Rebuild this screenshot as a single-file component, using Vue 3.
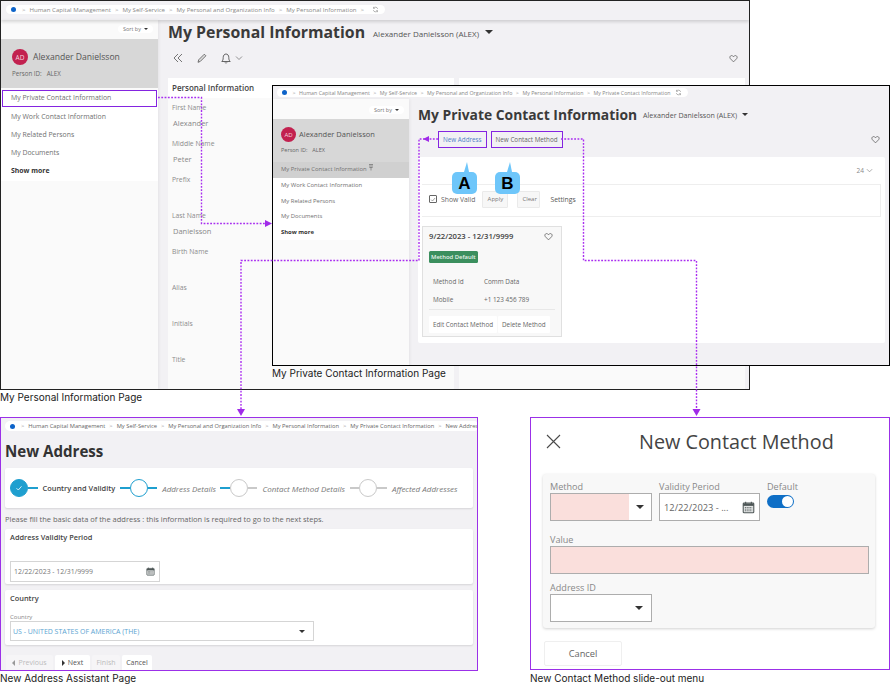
<script setup>
const crumbsPersonal = ['Human Capital Management', 'My Self-Service', 'My Personal and Organization Info', 'My Personal Information']
const crumbsPrivate = [...crumbsPersonal, 'My Private Contact Information']
const crumbsAddress = [...crumbsPrivate, 'New Address']

const navLinks = ['My Work Contact Information', 'My Related Persons', 'My Documents']

const personalFields = [
  { label: 'First Name', value: 'Alexander' },
  { label: 'Middle Name', value: 'Peter' },
  { label: 'Prefix', value: '' },
  { label: 'Last Name', value: 'Danielsson' },
  { label: 'Birth Name', value: '' },
  { label: 'Alias', value: '' },
  { label: 'Initials', value: '' },
  { label: 'Title', value: '' }
]

const steps = [
  { name: 'Country and Validity', state: 'done', left: false, right: true },
  { name: 'Address Details', state: 'active', left: true, right: true },
  { name: 'Contact Method Details', state: 'todo', left: true, right: false },
  { name: 'Affected Addresses', state: 'todo', left: false, right: false }
]
</script>

<template>
  <div class="canvas">
    <svg class="defs" width="0" height="0">
      <symbol id="heart" viewBox="0 0 16 16">
        <path d="M8 14 2.4 8.3C.6 6.4 1.7 2.8 4.6 2.8c1.5 0 2.6.8 3.4 2 .8-1.2 1.900-2 3.400-2 2.900 0 4 3.600 2.200 5.500z" fill="none" stroke="currentColor" stroke-width="1.300" />
      </symbol>
      <symbol id="refresh" viewBox="0 0 16 16">
        <path d="M13 6.500A5.200 5.200 0 0 0 3.600 5M3 9.500A5.200 5.200 0 0 0 12.400 11M3.400 2v3.300h3.300M12.600 14v-3.300H9.300" fill="none" stroke="currentColor" stroke-width="1.400" />
      </symbol>
      <symbol id="calendar" viewBox="0 0 16 16">
        <rect x="1.500" y="2.500" width="13" height="12" rx="1" fill="#e4e6e6" stroke="#4d5656" stroke-width="1.300" />
        <path d="M1.500 3h13v3h-13z" fill="#4d5656" />
        <path d="M4.500 1v3M11.500 1v3" stroke="#4d5656" stroke-width="1.300" />
        <path d="M3.500 8h9M3.500 10h9M3.500 12h9" stroke="#4d5656" stroke-dasharray="1.400 .8" />
      </symbol>
    </svg>

    <!-- My Personal Information -->
    <section class="win win-personal">
      <header class="crumb-bar">
        <nav class="crumbs crumbs-lg">
          <i class="home-dot"></i>
          <template v-for="c in crumbsPersonal" :key="c"><b class="sep">&gt;</b><span>{{ c }}</span></template>
          <b class="sep">&gt;</b>
          <svg class="crumb-refresh"><use href="#refresh" /></svg>
        </nav>
      </header>
      <div class="win-body">
        <aside class="side side-lg">
          <div class="sort-row"><span class="sort-pill">Sort by <i class="caret caret-xs"></i></span></div>
          <div class="person">
            <div class="person-top"><span class="avatar">AD</span><span class="person-name">Alexander Danielsson</span></div>
            <div class="person-id"><span>Person ID:</span><span>ALEX</span></div>
          </div>
          <ul class="nav">
            <li class="nav-outlined">My Private Contact Information</li>
            <li v-for="n in navLinks" :key="n">{{ n }}</li>
            <li class="nav-more">Show more</li>
          </ul>
        </aside>
        <main class="main-lg">
          <div class="title-row">
            <h1>My Personal Information</h1>
            <span class="title-sub">Alexander Danielsson (ALEX)</span>
            <i class="caret caret-md"></i>
          </div>
          <div class="tools">
            <svg width="12" height="12" viewBox="0 0 12 12" class="tool-a"><path d="M6 2 2 6l4 4M10 2 6 6l4 4" fill="none" stroke="#666" stroke-width=".9" /></svg>
            <svg width="12" height="12" viewBox="0 0 12 12" class="tool-b"><path d="M2 10.300l.7-2.500 5.600-5.600 1.600 1.600-5.600 5.600z" fill="#ddd" stroke="#555" stroke-width=".8" /></svg>
            <svg width="12" height="12" viewBox="0 0 12 12" class="tool-b"><path d="M1.800 9.500c1-1 1.400-1.800 1.400-4C3.200 3.400 4.400 2 6 2s2.800 1.400 2.800 3.500c0 2.200.4 3 1.400 4zM5 10.500c.3.800 1.700.8 2 0" fill="none" stroke="#555" stroke-width=".9" /></svg>
            <svg width="8" height="8" viewBox="0 0 8 8" class="tool-c"><path d="M1 2.500 4 5.500l3-3" fill="none" stroke="#777" stroke-width=".8" /></svg>
            <svg class="heart heart-end"><use href="#heart" /></svg>
          </div>
          <div class="columns">
            <div class="info-card">
              <h3>Personal Information</h3>
              <div class="info-fields">
                <div v-for="f in personalFields" :key="f.label" class="info-field">
                  <label>{{ f.label }}</label>
                  <span>{{ f.value }}</span>
                </div>
              </div>
            </div>
            <div class="info-card"><h3></h3></div>
          </div>
        </main>
      </div>
    </section>
    <p class="cap cap-personal">My Personal Information Page</p>

    <!-- My Private Contact Information -->
    <section class="win win-private">
      <header class="crumb-bar-plain">
        <nav class="crumbs crumbs-sm">
          <i class="home-dot"></i>
          <template v-for="c in crumbsPrivate" :key="c"><b class="sep">&gt;</b><span>{{ c }}</span></template>
          <svg class="crumb-refresh"><use href="#refresh" /></svg>
        </nav>
      </header>
      <div class="win-body">
        <aside class="side side-sm">
          <div class="sort-row"><span class="sort-pill">Sort by <i class="caret caret-xs"></i></span></div>
          <div class="person">
            <div class="person-top"><span class="avatar">AD</span><span class="person-name">Alexander Danielsson</span></div>
            <div class="person-id"><span>Person ID:</span><span>ALEX</span></div>
          </div>
          <ul class="nav">
            <li class="nav-selected">My Private Contact Information <svg width="6" height="7" viewBox="0 0 6 7"><path d="M1 .5h4M1.500 3.500h3M3 3.500v3M2 .5v3M4 .5v3" stroke="#666" stroke-width=".6" fill="none" /></svg></li>
            <li v-for="n in navLinks" :key="n">{{ n }}</li>
            <li class="nav-more">Show more</li>
          </ul>
        </aside>
        <main class="main-sm">
          <div class="title-row">
            <h1>My Private Contact Information</h1>
            <span class="title-sub">Alexander Danielsson (ALEX)</span>
            <i class="caret caret-sm"></i>
          </div>
          <div class="actions">
            <a class="action action-link">New Address</a>
            <a class="action">New Contact Method</a>
            <svg class="heart heart-end"><use href="#heart" /></svg>
          </div>
          <div class="results">
            <div class="results-head"><span>24</span><svg width="7" height="7" viewBox="0 0 8 8"><path d="M1 2.500 4 5.500l3-3" fill="none" stroke="#888" stroke-width=".8" /></svg></div>
            <div class="filters">
              <span class="check"><svg width="7" height="7" viewBox="0 0 8 8"><path d="M1.500 4.200 3.300 6 6.800 2" fill="none" stroke="#666" stroke-width=".8" /></svg></span>
              <span class="show-valid">Show Valid</span>
              <button class="filter-btn btn-apply">Apply</button>
              <button class="filter-btn btn-clear">Clear</button>
              <span class="settings">Settings</span>
            </div>
            <article class="method">
              <div class="method-head"><strong>9/22/2023 - 12/31/9999</strong><svg class="heart"><use href="#heart" /></svg></div>
              <span class="badge">Method Default</span>
              <dl class="method-rows">
                <dt>Method Id</dt><dd>Comm Data</dd>
                <dt>Mobile</dt><dd>+1 123 456 789</dd>
              </dl>
              <div class="method-btns"><button>Edit Contact Method</button><button>Delete Method</button></div>
            </article>
          </div>
        </main>
      </div>
    </section>
    <p class="cap cap-private">My Private Contact Information Page</p>

    <!-- New Address assistant -->
    <section class="win win-address">
      <nav class="crumbs crumbs-addr">
        <i class="home-dot"></i>
        <template v-for="c in crumbsAddress" :key="c"><b class="sep">&gt;</b><span>{{ c }}</span></template>
      </nav>
      <h1 class="addr-title">New Address</h1>
      <div class="addr-card stepper">
        <div v-for="s in steps" :key="s.name" class="step" :class="'step-' + s.state">
          <i class="step-line" :class="{ on: s.left }"></i>
          <span class="step-circle">
            <svg v-if="s.state === 'done'" width="8" height="8" viewBox="0 0 8 8"><path d="M1.500 4.200 3.300 6 6.500 2.300" fill="none" stroke="#fff" stroke-width=".8" /></svg>
          </span>
          <i class="step-line" :class="{ on: s.right }"></i>
          <span class="step-name">{{ s.name }}</span>
        </div>
      </div>
      <p class="addr-hint">Please fill the basic data of the address : this information is required to go to the next steps.</p>
      <div class="addr-card addr-validity">
        <h4>Address Validity Period</h4>
        <div class="addr-date"><span>12/22/2023 - 12/31/9999</span><svg width="9" height="9"><use href="#calendar" /></svg></div>
      </div>
      <div class="addr-card addr-country">
        <h4>Country</h4>
        <label>Country</label>
        <div class="addr-select"><span>US - UNITED STATES OF AMERICA (THE)</span><i class="caret caret-sm"></i></div>
      </div>
      <div class="addr-btns">
        <button class="off btn-prev"><i class="tri-left"></i>Previous</button>
        <button class="btn-next"><i class="tri-right"></i>Next</button>
        <button class="off btn-finish">Finish</button>
        <button class="btn-cancel">Cancel</button>
      </div>
    </section>
    <p class="cap cap-address">New Address Assistant Page</p>

    <!-- New Contact Method slide-out -->
    <section class="win win-method">
      <header class="slide-head">
        <svg width="15" height="15" viewBox="0 0 15 15"><path d="M1 1l13 13M14 1 1 14" stroke="#4a4a4a" stroke-width="1.100" /></svg>
        <h2>New Contact Method</h2>
      </header>
      <div class="slide-form">
        <div class="slide-row">
          <div class="slide-field w-102">
            <label>Method</label>
            <div class="slide-input"><span class="pink-part"></span><span class="select-end"><i class="caret caret-md"></i></span></div>
          </div>
          <div class="slide-field w-101">
            <label>Validity Period</label>
            <div class="slide-input date-input"><span>12/22/2023 - ...</span><svg width="13" height="13"><use href="#calendar" /></svg></div>
          </div>
          <div class="slide-field">
            <label>Default</label>
            <span class="toggle"><i></i></span>
          </div>
        </div>
        <div class="slide-field value-field">
          <label>Value</label>
          <div class="slide-input pink"></div>
        </div>
        <div class="slide-field w-102">
          <label>Address ID</label>
          <div class="slide-input white-select"><i class="caret caret-md"></i></div>
        </div>
      </div>
      <button class="slide-cancel">Cancel</button>
    </section>
    <p class="cap cap-method">New Contact Method slide-out menu</p>

    <!-- connectors between the screens -->
    <svg class="wires" width="891" height="684" viewBox="0 0 891 684">
      <g fill="none" stroke="#a92df0" stroke-width="1.400" stroke-dasharray="1.800 1.500">
        <path d="M158 97.500H201.500V223.500H267" />
        <path d="M438 139H419V260.500H241V409" />
        <path d="M561 139H583.500V260.500H696.500V409" />
      </g>
      <g fill="#a02be8">
        <path d="M272 223.500 265 220v7z" />
        <path d="M423 139l6-3v6z" />
        <path d="M241 416l-4-7h8z" />
        <path d="M696.500 416l-4-7h8z" />
      </g>
    </svg>

    <!-- callouts -->
    <div class="callout callout-a">A</div>
    <div class="callout callout-b">B</div>
  </div>
</template>

<style scoped>
.canvas {
  position: relative;
  width: 891px;
  height: 684px;
  overflow: hidden;
  background: #fff;
  font-family: "Open Sans", sans-serif;
  color: #666;
}
.defs { position: absolute; }
.win {
  position: absolute;
  box-sizing: border-box;
  background: #f2f1f4;
  overflow: hidden;
}
.win-personal { left: 0; top: 0; width: 750px; height: 390px; border: 1px solid #222; }
.win-private { left: 272px; top: 85px; width: 618px; height: 281px; border: 1.500px solid #000; }
.win-address { left: 0; top: 417px; width: 478px; height: 254px; border: 1px solid #9b30e8; }
.win-method { left: 530px; top: 417px; width: 360px; height: 253px; border: 1px solid #9b30e8; background: #fff; }

.cap {
  position: absolute;
  margin: 0;
  font: 10px/12px Inter, sans-serif;
  color: #222;
  white-space: nowrap;
}
.cap-personal { left: 0; top: 391px; }
.cap-private { left: 272px; top: 367px; }
.cap-address { left: 0; top: 672px; }
.cap-method { left: 530px; top: 672px; }

/* breadcrumbs */
.crumb-bar {
  height: 19px;
  padding: 4px 5px 0;
  box-sizing: border-box;
  box-shadow: 0 2px 3px rgba(0, 0, 0, .14);
  position: relative;
}
.crumb-bar-plain { padding: 2px 4px 0; height: 11px; }
.crumbs {
  display: flex;
  align-items: center;
  background: #fff;
  border-radius: 6px;
  color: #888;
  white-space: nowrap;
}
.crumbs-lg { height: 9px; width: 379px; padding-left: 3px; font-size: 6.100px; box-sizing: border-box; }
.crumbs-sm { height: 9px; width: 411px; padding-left: 3px; font-size: 5.300px; box-sizing: border-box; }
.crumbs-addr {
  height: 10px;
  width: 474px;
  margin: 3px 0 0 4px;
  padding-left: 3px;
  font-size: 5.770px;
  overflow: hidden;
  color: #666;
  box-sizing: border-box;
}
.home-dot {
  flex: none;
  width: 5px;
  height: 5px;
  margin: 0 2px;
  border-radius: 50%;
  background: #0d63c9;
}
.sep { margin: 0 4px; font-weight: 400; color: #999; }
.crumbs-sm .sep { margin: 0 3.500px; }
.crumb-refresh { width: 7px; height: 7px; margin-left: 4px; color: #888; }

.win-body { display: flex; height: 369px; }

/* side panel */
.side { flex: none; background: #fafafa; box-shadow: 1px 0 3px rgba(0, 0, 0, .06); }
.side-lg { width: 157px; }
.side-sm { width: 136px; height: 280px; }
.sort-row { display: flex; justify-content: flex-end; padding-right: 5px; }
.side-lg .sort-row { padding-top: 5px; }
.side-sm .sort-row { padding-top: 7px; }
.sort-pill {
  display: flex;
  align-items: center;
  gap: 3px;
  height: 8px;
  padding: 0 5px;
  border-radius: 5px;
  background: #fff;
  font-size: 5.500px;
  color: #777;
}
.person { background: #d7d7d7; }
.side-lg .person { height: 49px; margin-top: 6px; padding: 10px 11px 0; box-sizing: border-box; }
.side-sm .person { height: 43px; margin-top: 5px; padding: 8px 8px 0; box-sizing: border-box; }
.person-top { display: flex; align-items: center; }
.avatar {
  display: flex;
  align-items: center;
  justify-content: center;
  border-radius: 50%;
  background: #c2214f;
  color: #f6d6df;
  font-weight: 400;
}
.side-lg .avatar { width: 16px; height: 16px; font-size: 6.500px; margin-right: 5px; }
.side-sm .avatar { width: 15px; height: 15px; font-size: 6px; margin-right: 3px; }
.person-name { color: #555; }
.side-lg .person-name { font-size: 8.600px; }
.side-sm .person-name { font-size: 7.500px; margin-top: -2px; }
.person-id { display: flex; color: #666; }
.side-lg .person-id { gap: 5px; margin-top: 4px; font-size: 6.200px; }
.side-sm .person-id { gap: 5px; margin-top: 4px; font-size: 5.500px; }

.nav { margin: 0; padding: 0; list-style: none; background: #fff; color: #707070; white-space: nowrap; }
.side-lg .nav { font-size: 6.900px; padding-bottom: 1px; margin-top: 2px; }
.side-lg .nav li { box-sizing: border-box; height: 18px; line-height: 18px; padding-left: 10px; }
.side-lg .nav .nav-outlined {
  height: 17px;
  line-height: 14px;
  margin: 0 1px 1px;
  padding-left: 8px;
  border: 1px solid #8424e0;
}
.side-sm .nav { font-size: 5.900px; }
.side-sm .nav li { box-sizing: border-box; height: 15.500px; line-height: 15.500px; padding-left: 8px; }
.side-sm .nav .nav-selected { height: 16px; background: #d0d0d0; }
.side-lg .nav .nav-more, .side-sm .nav .nav-more { font-weight: 700; color: #333; }

/* page header */
h1 { margin: 0; color: #3a3a3a; font-weight: 700; white-space: nowrap; }
.title-row { display: flex; align-items: center; }
.main-lg { flex: 1; padding: 0 4px 0 10px; }
.main-lg .title-row { height: 22px; margin-top: 1px; }
.main-lg h1 { font-size: 15.850px; }
.main-lg .title-sub { margin-left: 8px; margin-top: 2px; font-size: 8px; color: #555; }
.main-sm { flex: 1; padding: 0 4px 0 9px; }
.main-sm .title-row { height: 20px; margin-top: 5px; }
.main-sm h1 { font-size: 13.850px; }
.main-sm .title-sub { margin-left: 6px; margin-top: 2px; font-size: 7.100px; color: #555; }
.caret {
  display: inline-block;
  width: 0;
  height: 0;
  border-style: solid;
  border-color: #333 transparent transparent;
}
.caret-xs { border-width: 2.500px 2.500px 0; }
.caret-sm { border-width: 3px 3px 0; margin-left: 5px; }
.caret-md { border-width: 4px 4px 0; margin-left: 6px; }

.tools { display: flex; align-items: center; height: 20px; margin-top: 5px; padding-left: 4px; }
.tool-b { margin-left: 12px; }
.tool-c { margin-left: 3px; }
.heart { width: 9px; height: 9px; color: #555; }
.heart-end { margin-left: auto; margin-right: 7px; }
.actions .heart-end { margin-right: 5px; }

.columns { display: flex; gap: 5px; margin-top: 10px; }
.info-card { flex: 1; background: #fafafa; border-radius: 2px; min-height: 312px; }
.info-card h3 {
  margin: 0;
  padding: 0 4px;
  height: 20px;
  line-height: 20px;
  background: #fff;
  font-size: 8px;
  font-weight: 600;
  color: #444;
}
.info-fields { padding: 4px 4px 0; }
.info-field { height: 36px; }
.info-field label { display: block; font-size: 6.800px; line-height: 11px; color: #8c8c8c; }
.info-field span { display: block; margin: 5px 0 0 1px; font-size: 7.500px; line-height: 11px; color: #888; }

/* private contact page */
.actions { display: flex; align-items: center; gap: 4px; height: 18px; margin-top: 6px; padding-left: 20px; }
.action {
  box-sizing: border-box;
  height: 17px;
  line-height: 15px;
  padding: 0 4px;
  border: 1px solid #8424e0;
  font-size: 6.300px;
  color: #666;
  white-space: nowrap;
}
.action-link { color: #4f7fc9; }
.results {
  margin: 9px 0 0;
  width: 467px;
  height: 186px;
  box-sizing: border-box;
  padding: 0 4px;
  background: #fff;
  border-radius: 2px;
}
.results-head {
  display: flex;
  align-items: center;
  justify-content: flex-end;
  gap: 2px;
  height: 27px;
  padding-right: 8px;
  font-size: 6.500px;
  color: #888;
}
.filters {
  display: flex;
  align-items: center;
  height: 33px;
  box-sizing: border-box;
  padding: 0 0 3px 7px;
  border: 1px solid #eee;
  border-width: 1px 1px 1px 0;
  font-size: 6.800px;
}
.check {
  display: flex;
  align-items: center;
  justify-content: center;
  width: 8px;
  height: 8px;
  box-sizing: border-box;
  border: .7px solid #666;
  border-radius: 1px;
}
.show-valid { margin-left: 4px; color: #666; }
.filter-btn {
  height: 17px;
  padding: 0 4px;
  border: 1px solid #eaeaea;
  background: #f7f7f7;
  border-radius: 1px;
  font: 6px "Open Sans", sans-serif;
  color: #777;
}
.btn-apply { margin-left: 7px; width: 26px; }
.btn-clear { margin-left: 9px; width: 23px; }
.settings { margin-left: 10px; color: #555; }
.method {
  width: 140px;
  height: 111px;
  box-sizing: border-box;
  margin-top: 9px;
  padding: 3px 6px 0;
  background: #f8f8f8;
  border: 1px solid #e0e0e0;
}
.method-head { display: flex; align-items: center; justify-content: space-between; height: 12px; padding-right: 2px; }
.method-head strong { font-size: 7.700px; font-weight: 600; color: #444; }
.badge {
  display: inline-block;
  margin-top: 5px;
  padding: 0 2px;
  height: 12px;
  line-height: 12px;
  border-radius: 1.500px;
  background: #3b8f5e;
  color: #e6f3ea;
  font-size: 5.900px;
  font-weight: 600;
}
.method-rows {
  display: grid;
  grid-template-columns: 51px 1fr;
  grid-auto-rows: 18px;
  align-items: center;
  margin: 8px 0 0;
  padding: 0 4px 1px;
  font-size: 6.400px;
  border-bottom: 1px solid #e8e8e8;
  color: #666;
}
.method-rows dd { margin: 0; }
.method-btns { display: flex; gap: 1px; margin-top: 6px; }
.method-btns button {
  height: 17px;
  padding: 0 4px;
  border: 0;
  background: #fff;
  border-radius: 1px;
  font: 6.300px "Open Sans", sans-serif;
  color: #666;
  white-space: nowrap;
}

/* new address assistant */
.addr-title { margin: 9px 0 0 4px; height: 22px; font-size: 15.100px; line-height: 22px; color: #333; }
.addr-card {
  margin: 0 4px;
  background: #fff;
  border-radius: 2px;
  box-shadow: 0 1px 2px rgba(0, 0, 0, .12);
}
.addr-card h4 { margin: 0; font-size: 7.400px; font-weight: 600; color: #444; }
.stepper { display: flex; align-items: center; height: 40px; margin-top: 6px; padding-left: 5px; }
.step { display: flex; align-items: center; }
.step-circle {
  display: flex;
  align-items: center;
  justify-content: center;
  width: 18px;
  height: 18px;
  box-sizing: border-box;
  border: 1px solid #c9c9c9;
  border-radius: 50%;
}
.step-done .step-circle { background: #1f9fcf; border-color: #1f9fcf; }
.step-active .step-circle { border-color: #1f9fcf; }
.step-line { display: block; width: 9.500px; height: 1.500px; background: #c9c9c9; }
.step-line.on { background: #1f9fcf; }
.step-done .step-line:first-child { display: none; }
.step-name { margin: 0 5px; font-size: 8px; font-style: italic; color: #777; white-space: nowrap; }
.step-active .step-name { margin-right: 4.500px; }
.step-done .step-name { font-size: 7.400px; font-style: normal; font-weight: 600; color: #444; }
.addr-hint { margin: 0 0 0 4px; height: 21px; font-size: 7.490px; line-height: 22px; color: #666; white-space: nowrap; }
.addr-validity { height: 55px; padding: 3px 5px 0; box-sizing: border-box; }
.addr-date {
  display: flex;
  align-items: center;
  justify-content: space-between;
  box-sizing: border-box;
  width: 150px;
  height: 21px;
  margin-top: 19px;
  padding: 0 4px 0 3px;
  border: 1px solid #d5d5d5;
  font-size: 6.900px;
  color: #777;
}
.addr-country { height: 55px; margin-top: 6px; padding: 3px 5px 0; box-sizing: border-box; }
.addr-country label { display: block; margin-top: 10px; font-size: 6px; line-height: 8px; color: #888; }
.addr-select {
  display: flex;
  align-items: center;
  justify-content: space-between;
  box-sizing: border-box;
  width: 304px;
  height: 20px;
  padding: 0 8px 0 2px;
  border: 1px solid #d5d5d5;
  font-size: 6.980px;
  color: #5aa4d2;
}
.addr-btns { display: flex; gap: 2px; margin: 10px 0 0 5px; }
.addr-btns button {
  display: flex;
  align-items: center;
  justify-content: center;
  gap: 3px;
  height: 15px;
  padding: 0;
  border: 0;
  background: #fff;
  border-radius: 2px 2px 0 0;
  font: 7px "Open Sans", sans-serif;
  color: #555;
}
.addr-btns .off { background: #f6f5f7; color: #bbb; }
.btn-prev { width: 47px; }
.btn-next { width: 35px; }
.btn-finish { width: 28px; }
.btn-cancel { width: 30px; }
.tri-left { border: solid transparent; border-width: 3px 3px 3px 0; border-right-color: #999; }
.tri-right { border: solid transparent; border-width: 3px 0 3px 3px; border-left-color: #333; }

/* slide-out */
.slide-head { display: flex; align-items: center; height: 46px; padding-left: 15px; box-sizing: border-box; }
.slide-head h2 {
  margin: 0 0 0 78px;
  font-size: 19.800px;
  font-weight: 400;
  color: #444;
  white-space: nowrap;
}
.slide-form {
  box-sizing: border-box;
  width: 332px;
  height: 154px;
  margin: 10px 0 0 12px;
  padding: 7px 6px 0 7px;
  background: #f8f8f8;
  border-radius: 3px;
  box-shadow: 0 1px 3px rgba(0, 0, 0, .18);
}
.slide-row { display: flex; gap: 7px; }
.slide-field label { display: block; height: 11px; font-size: 9.100px; line-height: 12.500px; color: #888; }
.w-102 { width: 102px; }
.w-101 { width: 101px; }
.slide-input {
  display: flex;
  box-sizing: border-box;
  height: 28px;
  margin-top: 1px;
  border: 1px solid #adadad;
  background: #fff;
}
.pink-part { width: 78px; background: #fadfdc; }
.select-end { display: flex; flex: 1; align-items: center; justify-content: center; }
.select-end .caret { margin: 0; }
.date-input { align-items: center; justify-content: space-between; padding: 0 4px; font-size: 9.300px; color: #666; white-space: nowrap; }
.toggle {
  display: flex;
  justify-content: flex-end;
  align-items: center;
  width: 27px;
  height: 13px;
  margin-top: 3px;
  padding-right: 1px;
  box-sizing: border-box;
  background: #0f6fc6;
  border-radius: 7px;
}
.toggle i { width: 11px; height: 11px; border-radius: 50%; background: #fff; }
.value-field { margin-top: 13px; }
.pink { background: #fadfdc; width: 319px; }
.slide-form > .w-102 { margin-top: 8px; }
.white-select { align-items: center; justify-content: flex-end; padding-right: 8px; }
.slide-cancel {
  display: block;
  width: 78px;
  height: 25px;
  margin: 13px 0 0 13px;
  background: #fff;
  border: 1px solid #efefef;
  border-radius: 2px;
  font: 9.300px "Open Sans", sans-serif;
  color: #666;
}

/* overlays */
.wires { position: absolute; left: 0; top: 0; pointer-events: none; }
.callout {
  position: absolute;
  top: 172px;
  width: 25px;
  height: 22px;
  border-radius: 5px;
  background: #6ec6fa;
  color: #000;
  text-align: center;
  font: 700 17px/23px "Liberation Sans", Arial, sans-serif;
}
.callout::before {
  content: "";
  position: absolute;
  left: 12px;
  top: -10px;
  border: solid transparent;
  border-width: 0 2px 10px 3px;
  border-bottom-color: #6ec6fa;
}
.callout-a { left: 452px; }
.callout-b { left: 495px; }
</style>

<style>
html, body { background: #fff; }
</style>
